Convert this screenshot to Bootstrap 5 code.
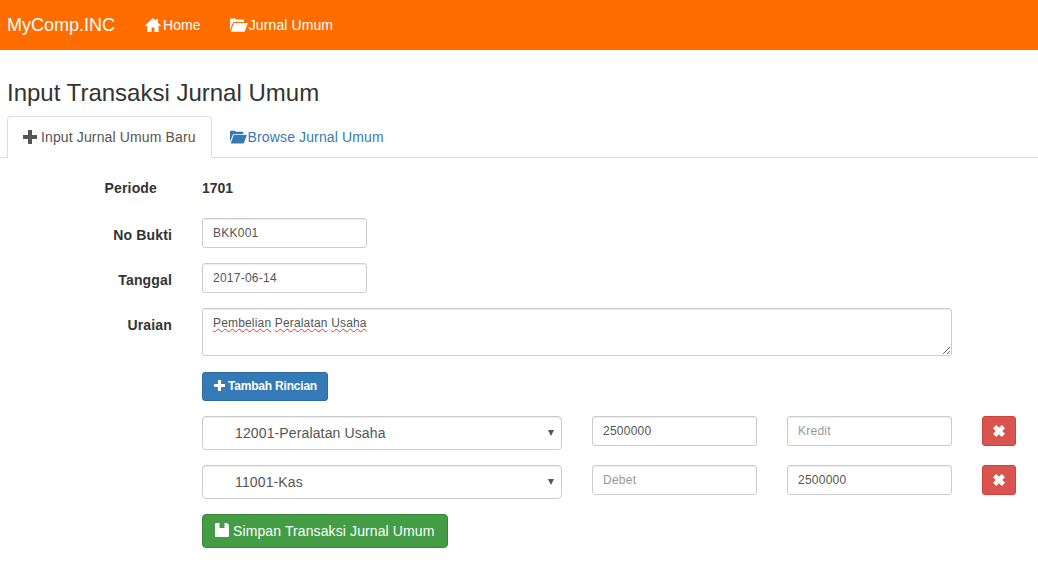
<!DOCTYPE html>
<html lang="id">
<head>
<meta charset="utf-8">
<title>Input Transaksi Jurnal Umum</title>
<link href="https://cdn.jsdelivr.net/npm/bootstrap@5.3.0/dist/css/bootstrap.min.css" rel="stylesheet">
<style>
body{font-family:"Liberation Sans",Arial,sans-serif;font-size:14px;color:#333;line-height:20px;background:#fff}
.ico{fill:currentColor;flex:none;display:inline-block}
.topbar{background:#ff6d00;height:50px}
.topbar .navbar-brand{color:#fff;font-size:18px;line-height:20px;padding:0;margin:0 0 0 7px;width:123px}
.topbar .nav-link{color:#fff;padding:0 15px;line-height:20px;display:flex;align-items:center;letter-spacing:.1px}
.topbar .nav-item+.nav-item .nav-link{padding-left:14px}
.home-txt{margin-left:2px}
.jur-txt{margin-left:1px}
.page-head{font-size:24px;line-height:26px;font-weight:400;margin:30px 0 0 7px;color:#333}
.tabbar{border-bottom:1px solid #ddd;margin-top:10px;padding-left:7px;height:42px}
.tabbar .nav-link{padding:10px 15px;line-height:20px;height:42px;border:1px solid transparent;border-radius:4px 4px 0 0;color:#337ab7;display:flex;align-items:center;letter-spacing:.13px}
.tabbar .nav-link.active{color:#555;background:#fff;border-color:#ddd #ddd #fff}
.formwrap{padding-left:202px;width:1038px}
.frow{display:flex}
.gap-row{gap:30px}
.flabel{width:172px;margin-left:-202px;margin-right:30px;text-align:right;font-weight:700;flex:none;letter-spacing:.15px}
.lab-off{padding-top:7px}
.lab-per{padding-right:15px}
.plain{font-weight:700}
.m20{margin-top:20px}
.m15{margin-top:15px}
.m16{margin-top:16px}
.ctl{height:30px;font-size:12px;line-height:18px;padding:5px 10px;border:1px solid #ccc;border-radius:3px;color:#555;box-shadow:inset 0 1px 1px rgba(0,0,0,.075);font-family:inherit;letter-spacing:.25px}
.ctl::placeholder{color:#999;opacity:1}
.ctl:focus{border-color:#ccc;box-shadow:inset 0 1px 1px rgba(0,0,0,.075)}
.w165{width:165px}
.memo{width:750px;height:48px;resize:vertical;overflow:auto;letter-spacing:.17px}
.sq{text-decoration:underline wavy #e0392f 1px;text-underline-offset:1px}
.pick{width:360px;height:34px;font-size:14px;line-height:20px;padding:6px 24px 6px 32px;border:1px solid #ccc;border-radius:4px;color:#555;font-family:inherit;letter-spacing:.13px;box-shadow:inset 0 1px 1px rgba(0,0,0,.075);background-size:6px 6px;background-position:right 7px center;background-image:url("data:image/svg+xml,%3Csvg xmlns='http://www.w3.org/2000/svg' viewBox='0 0 6 6'%3E%3Cpath fill='%23555' d='M0 0h6L3 6z'/%3E%3C/svg%3E")}
.btn-add{background:#337ab7;border:1px solid #2e6da4;color:#fff;font-size:12px;font-weight:700;line-height:18px;padding:3px 0 5px 11px;border-radius:3px;height:29px;width:126px;display:flex;align-items:center;gap:3px;white-space:nowrap;letter-spacing:-.2px}
.btn-x{background:#d9534f;border:1px solid #d43f3a;color:#fff;width:34px;height:30px;border-radius:3px;padding:0;display:flex;align-items:center;justify-content:center}
.btn-save{background:#449d44;border:1px solid #398439;color:#fff;font-size:14px;line-height:20px;padding:6px 12px;border-radius:4px;height:34px;width:246px;display:flex;align-items:center;gap:4px;white-space:nowrap;letter-spacing:.11px}
.ico-up{margin-top:-3px}
.ico-gap{margin-left:2px;margin-right:1px}
</style>
</head>
<body>
<nav class="navbar topbar p-0 flex-nowrap justify-content-start">
  <a class="navbar-brand" href="#">MyComp.INC</a>
  <ul class="nav">
    <li class="nav-item"><a class="nav-link" href="#"><svg class="ico" width="16" height="14" viewBox="0 0 16 14"><path d="M8 0 0 7.6l1 1L2.4 7.3V14h4.2V9.6h2.8V14h4.2V7.3L15 8.6l1-1L13 4.7V1h-2v1.8z"/></svg><span class="home-txt">Home</span></a></li>
    <li class="nav-item"><a class="nav-link" href="#"><svg class="ico" width="18" height="14" viewBox="0 0 18 14"><path d="M0 12V1.5C0 .8.6.4 1.2.4h3.6c.7 0 1 .4 1.3 1h7c.6 0 1 .4 1 1V4H3.2L0 12z"/><path d="M3.9 5H18l-3.2 8.2c-.1.4-.4.6-.8.6H.8z"/></svg><span class="jur-txt">Jurnal Umum</span></a></li>
  </ul>
</nav>

<h1 class="page-head">Input Transaksi Jurnal Umum</h1>

<ul class="nav tabbar">
  <li class="nav-item"><a class="nav-link active" href="#"><svg class="ico me-1" width="14" height="14" viewBox="0 0 14 14"><path d="M5 0h4v5h5v4H9v5H5V9H0V5h5z"/></svg>Input Jurnal Umum Baru</a></li>
  <li class="nav-item"><a class="nav-link" href="#"><svg class="ico ico-gap" width="17" height="14" viewBox="0 0 18 14"><path d="M0 12V1.5C0 .8.6.4 1.2.4h3.6c.7 0 1 .4 1.3 1h7c.6 0 1 .4 1 1V4H3.2L0 12z"/><path d="M3.9 5H18l-3.2 8.2c-.1.4-.4.6-.8.6H.8z"/></svg>Browse Jurnal Umum</a></li>
</ul>

<form class="formwrap">
  <div class="frow align-items-center m20">
    <label class="flabel lab-per">Periode</label>
    <span class="plain">1701</span>
  </div>
  <div class="frow m20">
    <label class="flabel lab-off">No Bukti</label>
    <input class="form-control ctl w165" type="text" value="BKK001">
  </div>
  <div class="frow m15">
    <label class="flabel lab-off">Tanggal</label>
    <input class="form-control ctl w165" type="text" value="2017-06-14">
  </div>
  <div class="frow m15">
    <label class="flabel lab-off">Uraian</label>
    <div class="form-control ctl memo" role="textbox"><span class="sq">Pembelian</span> <span class="sq">Peralatan</span> <span class="sq">Usaha</span></div>
  </div>
  <div class="frow m16">
    <button type="button" class="btn btn-add"><svg class="ico" width="11" height="11" viewBox="0 0 14 14"><path d="M5 0h4v5h5v4H9v5H5V9H0V5h5z"/></svg>Tambah Rincian</button>
  </div>
  <div class="frow m15 gap-row">
    <select class="form-select pick"><option>12001-Peralatan Usaha</option></select>
    <input class="form-control ctl w165" type="text" value="2500000" placeholder="Debet">
    <input class="form-control ctl w165" type="text" placeholder="Kredit">
    <button type="button" class="btn btn-x"><svg class="ico" width="12" height="12" viewBox="0 0 12 12"><path d="M3.2 0 6 2.8 8.8 0 12 3.2 9.2 6 12 8.8 8.8 12 6 9.2 3.2 12 0 8.8 2.8 6 0 3.2z"/></svg></button>
  </div>
  <div class="frow m15 gap-row">
    <select class="form-select pick"><option>11001-Kas</option></select>
    <input class="form-control ctl w165" type="text" placeholder="Debet">
    <input class="form-control ctl w165" type="text" value="2500000" placeholder="Kredit">
    <button type="button" class="btn btn-x"><svg class="ico" width="12" height="12" viewBox="0 0 12 12"><path d="M3.2 0 6 2.8 8.8 0 12 3.2 9.2 6 12 8.8 8.8 12 6 9.2 3.2 12 0 8.8 2.800 6 0 3.2z"/></svg></button>
  </div>
  <div class="frow m15">
    <button type="button" class="btn btn-save"><svg class="ico ico-up" width="14" height="14" viewBox="0 0 14 14"><path d="M1 0h3.500v5h5V0H12l2 2v11a1 1 0 0 1-1 1H1a1 1 0 0 1-1-1V1a1 1 0 0 1 1-1z"/></svg>Simpan Transaksi Jurnal Umum</button>
  </div>
</form>
<script src="https://cdn.jsdelivr.net/npm/bootstrap@5.3.0/dist/js/bootstrap.bundle.min.js"></script>
</body>
</html>
